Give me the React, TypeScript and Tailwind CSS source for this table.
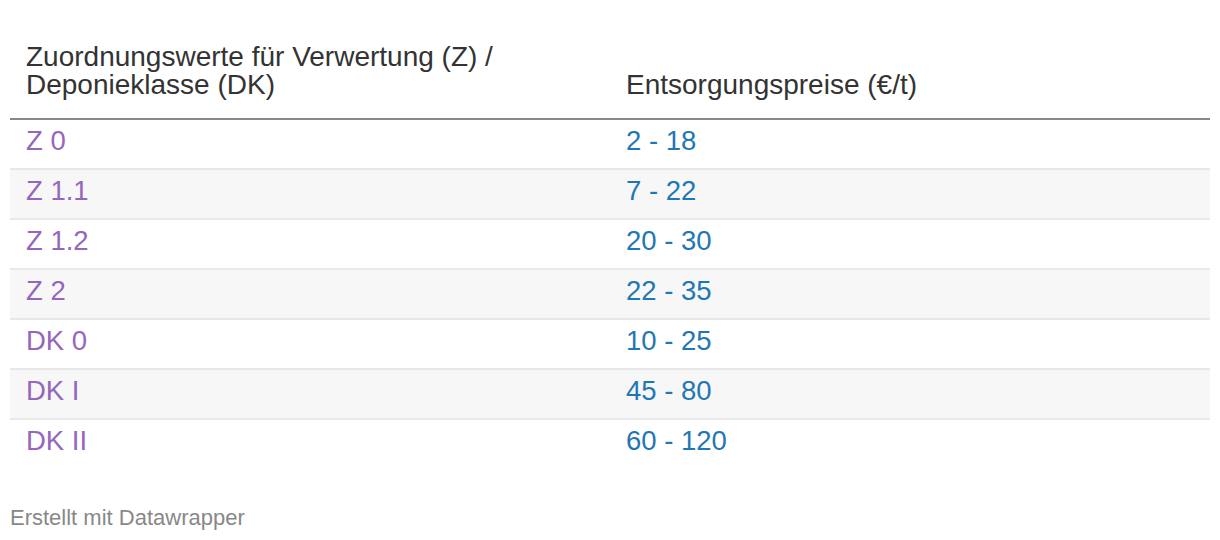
import React from "react";

interface Row {
  klasse: string;
  preis: string;
}

const rows: Row[] = [
  { klasse: "Z 0", preis: "2 - 18" },
  { klasse: "Z 1.1", preis: "7 - 22" },
  { klasse: "Z 1.2", preis: "20 - 30" },
  { klasse: "Z 2", preis: "22 - 35" },
  { klasse: "DK 0", preis: "10 - 25" },
  { klasse: "DK I", preis: "45 - 80" },
  { klasse: "DK II", preis: "60 - 120" },
];

const App = () => {
  return (
    <div className="w-[1220px] h-[540px] bg-white font-['Liberation_Sans',Arial,sans-serif] overflow-hidden">
      <div className="mx-[10px] pt-[43px]">
        {/* Header */}
        <div className="grid grid-cols-2 border-b-2 border-[#888888] pb-[19px] text-[28px] leading-[28px] text-[#333333]">
          <div className="px-[16px]">
            Zuordnungswerte für Verwertung (Z) /<br />
            Deponieklasse (DK)
          </div>
          <div className="px-[16px] flex items-end">Entsorgungspreise (€/t)</div>
        </div>

        {/* Rows */}
        {rows.map((row, i) => (
          <div
            key={row.klasse}
            className={`grid grid-cols-2 h-[50px] box-border pt-[6px] text-[27.5px] leading-[30px] ${
              i % 2 === 1 ? "bg-[#f7f7f7]" : "bg-white"
            } ${i < rows.length - 1 ? "border-b-2 border-[#e8e8e8]" : ""}`}
          >
            <div className="px-[16px] text-[#9467bd]">{row.klasse}</div>
            <div className="px-[16px] text-[#1f77b4]">{row.preis}</div>
          </div>
        ))}
      </div>

      {/* Footer */}
      <div className="mt-[36px] px-[10px] text-[22px] leading-[24px] text-[#888888]">
        Erstellt mit Datawrapper
      </div>
    </div>
  );
};

export default App;
